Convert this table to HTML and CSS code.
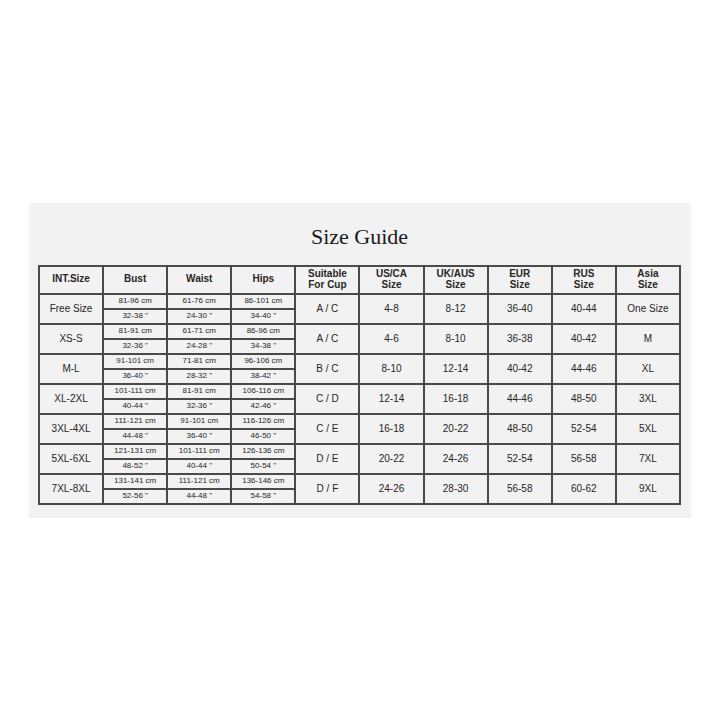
FILE: index.html
```html
<!DOCTYPE html>
<html lang="en">
<head>
<meta charset="utf-8">
<title>Size Guide</title>
<link rel="stylesheet" href="styles.css">
</head>
<body>
<div class="page">
  <section class="panel">
    <h1 class="title">Size Guide</h1>
    <table class="guide">
      <colgroup>
        <col><col><col><col><col><col><col><col><col><col>
      </colgroup>
      <thead>
        <tr>
          <th>INT.Size</th><th>Bust</th><th>Waist</th><th>Hips</th>
          <th>Suitable<br>For Cup</th><th>US/CA<br>Size</th><th>UK/AUS<br>Size</th>
          <th>EUR<br>Size</th><th>RUS<br>Size</th><th>Asia<br>Size</th>
        </tr>
      </thead>
      <tbody>
        <tr class="top"><td rowspan="2">Free Size</td><td class="sm">81-96 cm</td><td class="sm">61-76 cm</td><td class="sm">86-101 cm</td><td rowspan="2">A / C</td><td rowspan="2">4-8</td><td rowspan="2">8-12</td><td rowspan="2">36-40</td><td rowspan="2">40-44</td><td rowspan="2">One Size</td></tr>
        <tr class="bot"><td class="sm">32-38 "</td><td class="sm">24-30 "</td><td class="sm">34-40 "</td></tr>

        <tr class="top"><td rowspan="2">XS-S</td><td class="sm">81-91 cm</td><td class="sm">61-71 cm</td><td class="sm">86-96 cm</td><td rowspan="2">A / C</td><td rowspan="2">4-6</td><td rowspan="2">8-10</td><td rowspan="2">36-38</td><td rowspan="2">40-42</td><td rowspan="2">M</td></tr>
        <tr class="bot"><td class="sm">32-36 "</td><td class="sm">24-28 "</td><td class="sm">34-38 "</td></tr>

        <tr class="top"><td rowspan="2">M-L</td><td class="sm">91-101 cm</td><td class="sm">71-81 cm</td><td class="sm">96-106 cm</td><td rowspan="2">B / C</td><td rowspan="2">8-10</td><td rowspan="2">12-14</td><td rowspan="2">40-42</td><td rowspan="2">44-46</td><td rowspan="2">XL</td></tr>
        <tr class="bot"><td class="sm">36-40 "</td><td class="sm">28-32 "</td><td class="sm">38-42 "</td></tr>

        <tr class="top"><td rowspan="2">XL-2XL</td><td class="sm">101-111 cm</td><td class="sm">81-91 cm</td><td class="sm">106-116 cm</td><td rowspan="2">C / D</td><td rowspan="2">12-14</td><td rowspan="2">16-18</td><td rowspan="2">44-46</td><td rowspan="2">48-50</td><td rowspan="2">3XL</td></tr>
        <tr class="bot"><td class="sm">40-44 "</td><td class="sm">32-36 "</td><td class="sm">42-46 "</td></tr>

        <tr class="top"><td rowspan="2">3XL-4XL</td><td class="sm">111-121 cm</td><td class="sm">91-101 cm</td><td class="sm">116-126 cm</td><td rowspan="2">C / E</td><td rowspan="2">16-18</td><td rowspan="2">20-22</td><td rowspan="2">48-50</td><td rowspan="2">52-54</td><td rowspan="2">5XL</td></tr>
        <tr class="bot"><td class="sm">44-48 "</td><td class="sm">36-40 "</td><td class="sm">46-50 "</td></tr>

        <tr class="top"><td rowspan="2">5XL-6XL</td><td class="sm">121-131 cm</td><td class="sm">101-111 cm</td><td class="sm">126-136 cm</td><td rowspan="2">D / E</td><td rowspan="2">20-22</td><td rowspan="2">24-26</td><td rowspan="2">52-54</td><td rowspan="2">56-58</td><td rowspan="2">7XL</td></tr>
        <tr class="bot"><td class="sm">48-52 "</td><td class="sm">40-44 "</td><td class="sm">50-54 "</td></tr>

        <tr class="top"><td rowspan="2">7XL-8XL</td><td class="sm">131-141 cm</td><td class="sm">111-121 cm</td><td class="sm">136-146 cm</td><td rowspan="2">D / F</td><td rowspan="2">24-26</td><td rowspan="2">28-30</td><td rowspan="2">56-58</td><td rowspan="2">60-62</td><td rowspan="2">9XL</td></tr>
        <tr class="bot"><td class="sm">52-56 "</td><td class="sm">44-48 "</td><td class="sm">54-58 "</td></tr>
      </tbody>
    </table>
  </section>
</div>
</body>
</html>
```
FILE: styles.css
```css
html, body {
  margin: 0;
  padding: 0;
  background: #ffffff;
}

.page {
  min-height: 720px;
  display: flex;
  align-items: center;
  justify-content: center;
}

.panel {
  width: 662px;
  height: 315px;
  box-sizing: border-box;
  background: #f2f2f2;
  padding: 21px 10px 0 9px;
}

.title {
  margin: 0 0 15px;
  font-family: "Liberation Serif", "Times New Roman", serif;
  font-weight: normal;
  font-size: 22px;
  line-height: 26px;
  color: #1a1a1a;
  text-align: center;
}

.guide {
  width: 643px;
  table-layout: fixed;
  border-collapse: collapse;
  font-family: "Liberation Sans", Arial, sans-serif;
  color: #262626;
  font-size: 10px;
}

.guide th,
.guide td {
  border: 2px solid #4a4a4a;
  padding: 0;
  text-align: center;
  vertical-align: middle;
}

.guide th {
  height: 26px;
  font-weight: bold;
  font-size: 10px;
  line-height: 10.5px;
}

.guide td {
  line-height: 12px;
}

.guide tr.top td,
.guide tr.bot td {
  height: 13px;
}

.guide td.sm {
  font-size: 8px;
  line-height: 10px;
}
```
